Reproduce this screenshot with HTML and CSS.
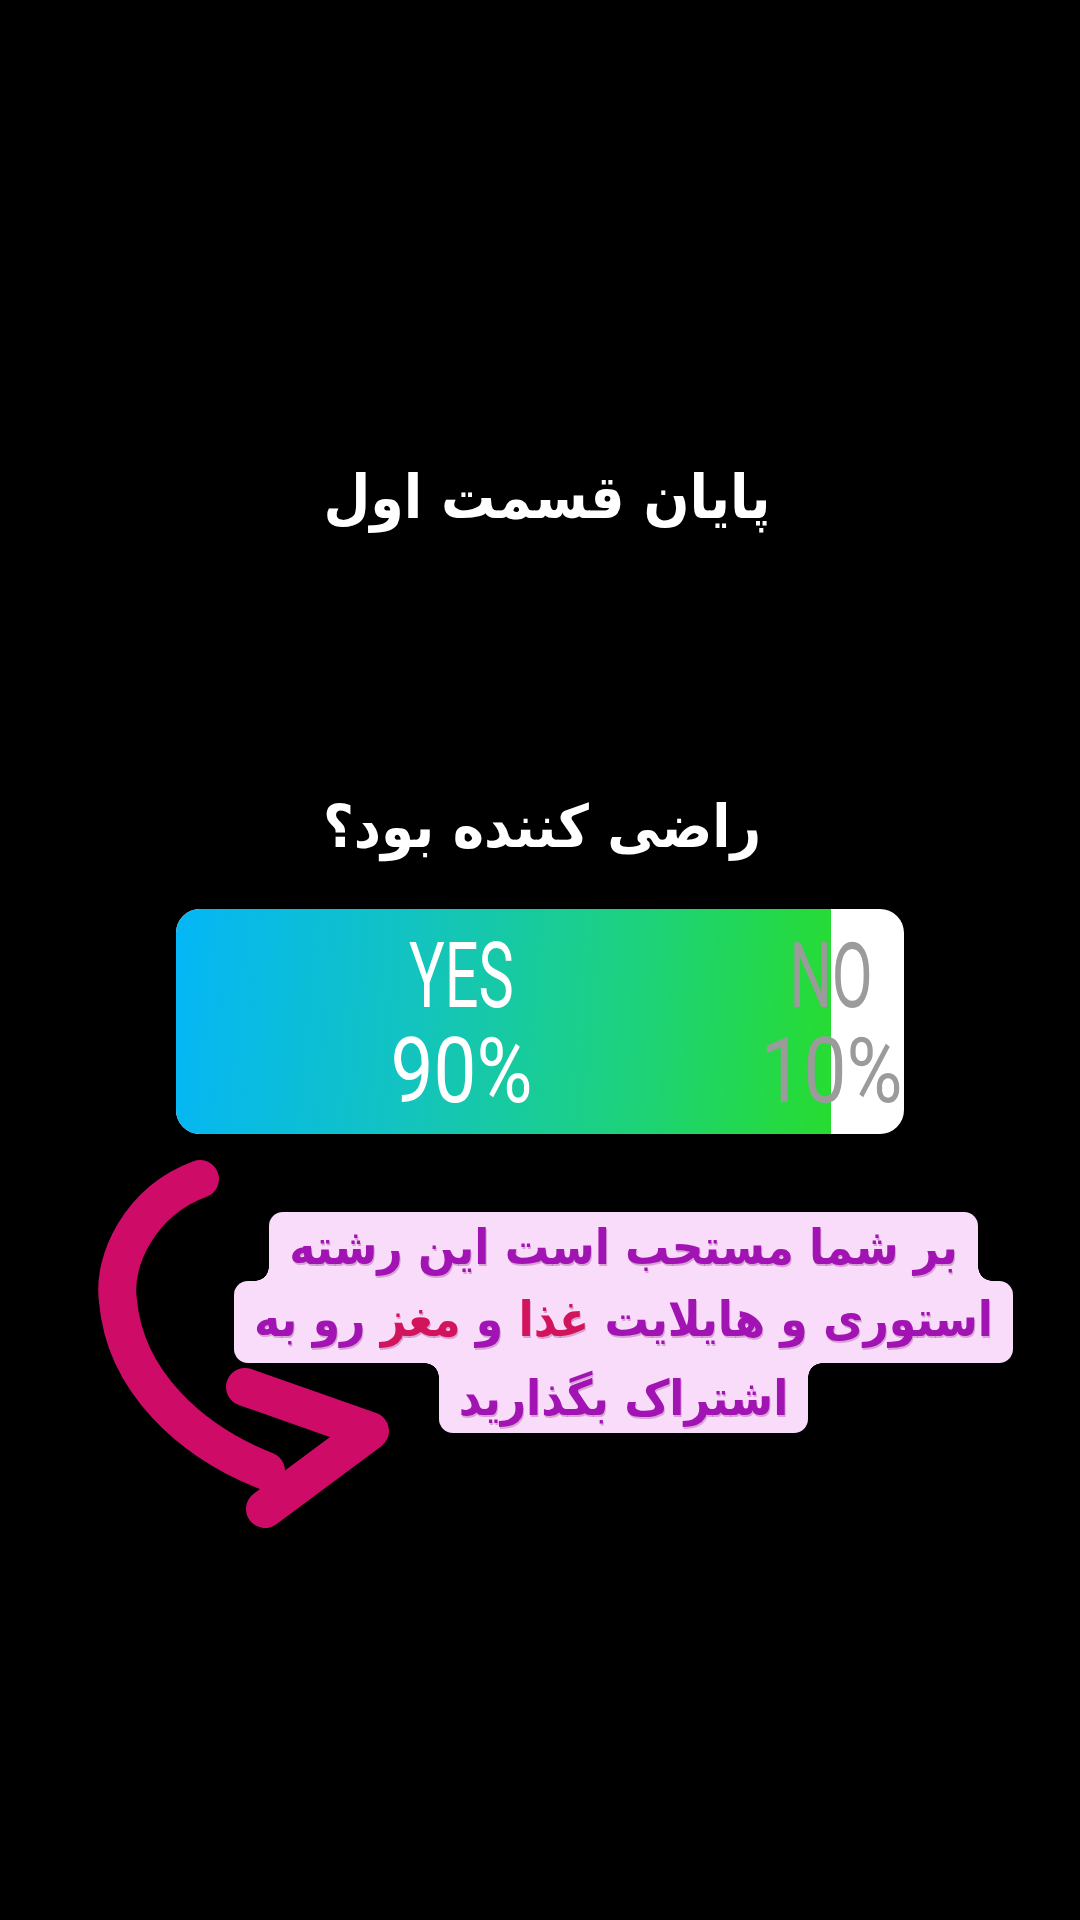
FILE: index.html
```html
<!DOCTYPE html>
<html lang="fa">
<head>
<meta charset="utf-8">
<title>Story</title>
<link rel="stylesheet" href="styles.css">
</head>
<body>
<main class="story">
  <h1 class="title" dir="rtl">پایان قسمت اول</h1>
  <section class="poll">
    <p class="question" dir="rtl">راضی کننده بود؟</p>
    <div class="poll-bar">
      <div class="poll-fill" style="width:90%"></div>
      <div class="poll-options">
        <div class="option option-yes">
          <span class="word">YES</span>
          <span class="pct">90%</span>
        </div>
        <div class="option option-no">
          <span class="word">NO</span>
          <span class="pct">10%</span>
        </div>
      </div>
    </div>
  </section>
  <section class="note">
    <svg class="arrow" viewBox="60 1140 360 400" width="360" height="400" aria-hidden="true">
      <path d="M200 1178 C 140 1200, 112 1260, 118 1300 C 125 1380, 190 1440, 266 1470" />
      <path d="M245 1386 L370 1430 L265 1508" />
    </svg>
    <div class="caption" dir="rtl">
      <span class="line line-first">بر شما مستحب است این رشته</span>
      <span class="line line-mid">استوری و هایلایت <em class="hl">غذا</em> و <em class="hl">مغز</em> رو به</span>
      <span class="line line-last">اشتراک بگذارید</span>
    </div>
  </section>
</main>
</body>
</html>
```

FILE: styles.css
```css
* { box-sizing: border-box; }

html, body {
  margin: 0;
  padding: 0;
  background: #000;
}

.story {
  width: 1080px;
  height: 1920px;
  background: #000;
  display: flex;
  flex-direction: column;
  overflow: hidden;
}

.title {
  margin: 447px 0 0 0;
  font-family: "DejaVu Sans Condensed", "DejaVu Sans", sans-serif;
  font-weight: bold;
  font-size: 60px;
  line-height: 100px;
  color: #fff;
  text-align: center;
  padding-left: 14px;
}

.poll {
  display: flex;
  flex-direction: column;
}

.question {
  margin: 235px 0 0 0;
  font-family: "DejaVu Sans Condensed", "DejaVu Sans", sans-serif;
  font-weight: bold;
  font-size: 59px;
  line-height: 90px;
  color: #fff;
  text-align: center;
  padding-left: 4px;
}

.poll-bar {
  position: relative;
  margin: 37px 0 0 176px;
  width: 728px;
  height: 225px;
  border-radius: 24px;
  background: #fff;
  overflow: hidden;
}

.poll-fill {
  position: absolute;
  left: 0;
  top: 0;
  bottom: 0;
  background: linear-gradient(95deg, #04b6f6 0%, #12c3c2 35%, #1dd27a 70%, #27dc2f 100%);
}

.poll-options {
  position: relative;
  display: grid;
  grid-template-columns: 571px 169px;
  padding-top: 20px;
  font-family: Roboto, "Liberation Sans", sans-serif;
  font-weight: 400;
  font-size: 90px;
  line-height: 95px;
  font-feature-settings: "zero" 1;
}

.option {
  display: flex;
  flex-direction: column;
  align-items: center;
}

.option-yes { color: #fff; }
.option-no { color: #9b9b9b; }

.word {
  display: block;
  transform: scaleX(0.66);
}

.pct {
  display: block;
  transform: scaleX(0.85);
}

.note {
  position: relative;
  margin-top: 7px;
  height: 400px;
  display: flex;
  justify-content: center;
  align-items: flex-start;
  padding-left: 167px;
}

.arrow {
  position: absolute;
  left: 60px;
  top: 0;
  fill: none;
  stroke: #cf0b68;
  stroke-width: 38;
  stroke-linecap: round;
  stroke-linejoin: round;
}

.caption {
  margin-top: 71px;
  display: flex;
  flex-direction: column;
  align-items: center;
  font-family: "DejaVu Sans Condensed", "DejaVu Sans", sans-serif;
  font-weight: bold;
  font-size: 49px;
  color: #a213b3;
  text-shadow: 1px 2px 0 rgba(110, 0, 100, 0.25);
}

.line {
  position: relative;
  display: block;
  background: #f9dcfa;
  padding: 0 20px;
  line-height: 72px;
  white-space: nowrap;
}

.line-first {
  height: 69px;
  border-radius: 14px 14px 0 0;
}

.line-mid {
  height: 82px;
  line-height: 78px;
  border-radius: 14px;
}

.line-last {
  height: 70px;
  border-radius: 0 0 14px 14px;
}

/* concave fillets where a narrow line meets the wider middle line */
.line-first::before,
.line-first::after,
.line-last::before,
.line-last::after {
  content: "";
  position: absolute;
  width: 14px;
  height: 14px;
}

.line-first::before {
  left: -14px;
  bottom: 0;
  background: radial-gradient(circle at 0 0, transparent 13.5px, #f9dcfa 14px);
}

.line-first::after {
  right: -14px;
  bottom: 0;
  background: radial-gradient(circle at 100% 0, transparent 13.5px, #f9dcfa 14px);
}

.line-last::before {
  left: -14px;
  top: 0;
  background: radial-gradient(circle at 0 100%, transparent 13.5px, #f9dcfa 14px);
}

.line-last::after {
  right: -14px;
  top: 0;
  background: radial-gradient(circle at 100% 100%, transparent 13.5px, #f9dcfa 14px);
}

.hl {
  font-style: normal;
  color: #d2145c;
}
```
